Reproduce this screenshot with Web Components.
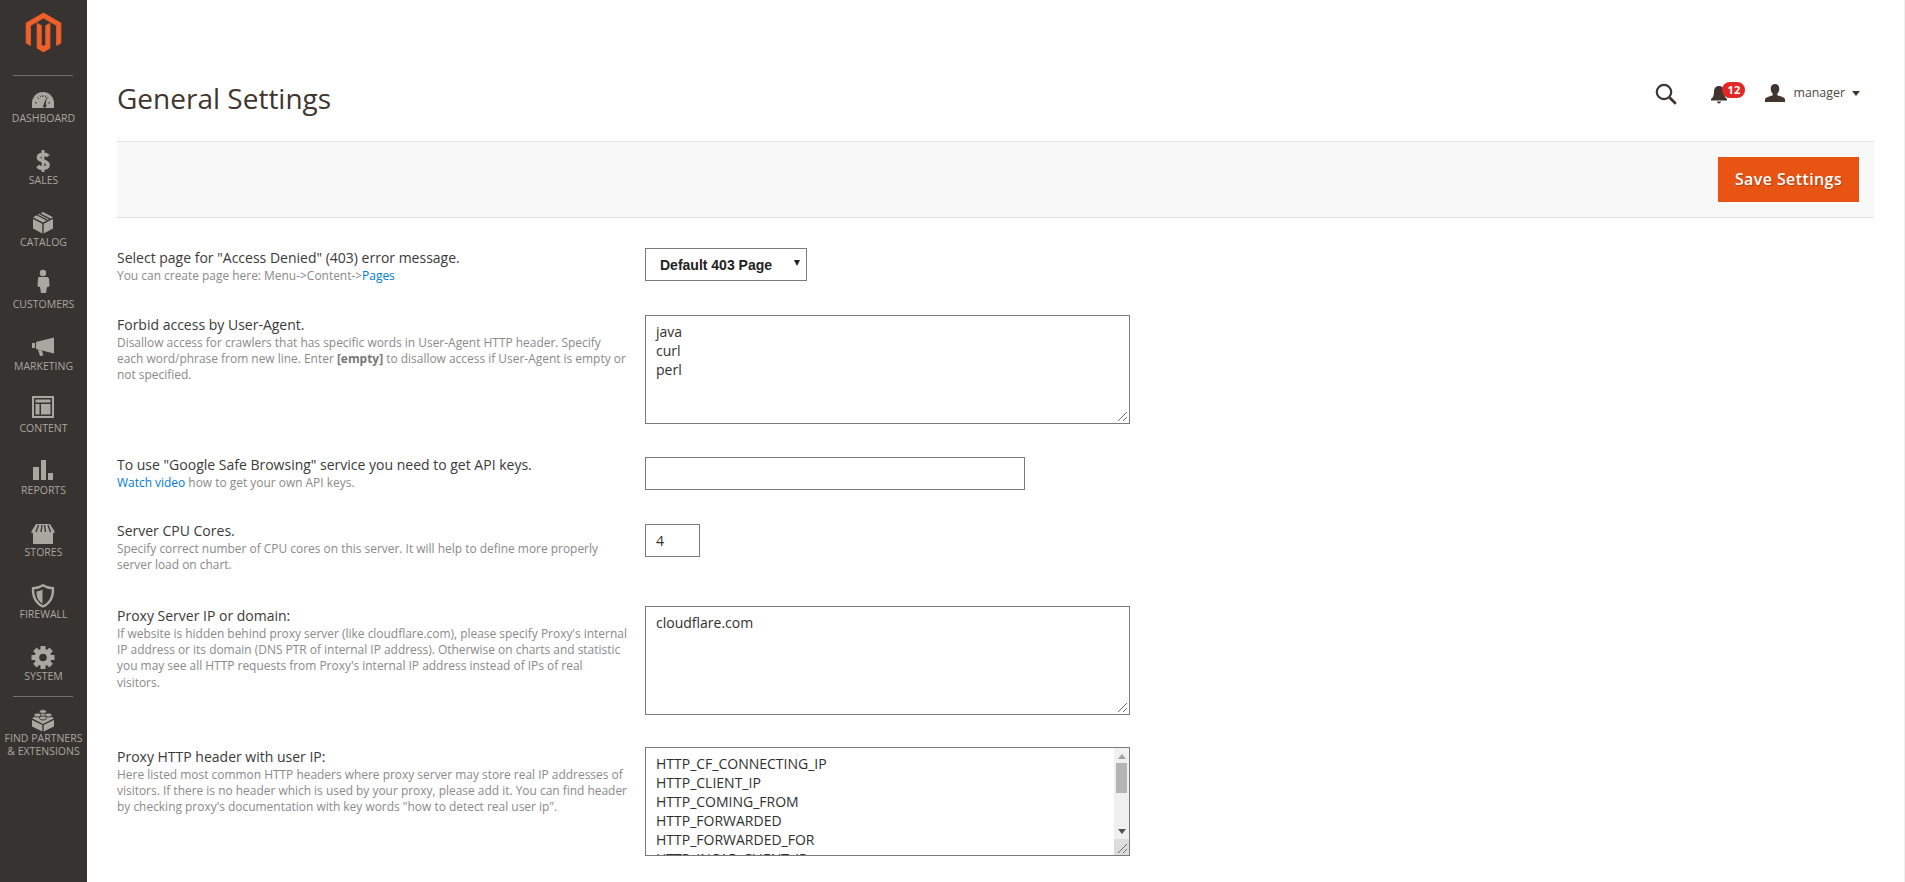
<!DOCTYPE html>
<html lang="en"><head><meta charset="utf-8"><title>General Settings</title>
<style>
html,body{margin:0;padding:0;height:882px;overflow:hidden;background:#fff;font-family:"Open Sans",sans-serif;color:#303030}
admin-shell{height:882px}
nav-item svg{display:block;width:26px;height:24px;overflow:visible}
nav-item svg .f,nav-item svg g.f>*{fill:#aaa6a0}
nav-item svg .d{stroke:#373330;fill:none}
a{color:#007bdb;text-decoration:none}
</style></head>
<body>
<admin-shell>
  <admin-nav slot="nav">
    <nav-item label="Dashboard"><svg viewBox="0 0 26 24"><path class="f" d="M2 21v-5a11 11 0 0 1 22 0v5z"/><path class="d" d="M5 15.5l2 .6M7.5 10.5l1.500 1.300M12.800 8v2M18 10.300l-1.300 1.400M20 15.500l-1.800.6M10 8.600l.6 1.500M15.800 8.600l-.6 1.500" stroke-width="1"/><path d="M13 20l1-3.500 3-7-1.200 7.500a1.600 1.600 0 0 1-2.800 3z" fill="#373330"/></svg></nav-item>
    <nav-item label="Sales"><svg viewBox="0 0 26 24"><path d="M18 7.200C16.500 4.800 8.800 4.500 8.500 8.500 8.200 12.800 18 11 18 15.800c0 4.200-8 4.200-10.300 1.200" fill="none" stroke="#aaa6a0" stroke-width="3.700"/><path d="M13 1v22" stroke="#aaa6a0" stroke-width="2.800"/></svg></nav-item>
    <nav-item label="Catalog"><svg viewBox="0 0 26 24"><path class="f" d="M3 8l9.300 4.800v9.700L3 17.500zM23 8l-9.300 4.800v9.700l9.300-5zM13 1l10 5.200-10 5.300L3 6.200z"/><path class="d" d="M7.200 4l10 5.200M9.800 2.700l10 5.200" stroke-width="1.300"/></svg></nav-item>
    <nav-item label="Customers"><svg viewBox="0 0 26 24"><circle class="f" cx="13" cy="0" r="3.200"/><path class="f" d="M8.500 4h9l1.500 1.500.5 8-2.500.5-1 6h-5l-1-6-2.500-.5.500-8z"/></svg></nav-item>
    <nav-item label="Marketing"><svg viewBox="0 0 26 24"><path class="f" d="M2 8h3v5H2zM6 7l18-4.500v16L6 14zM8 14.800l4 1 1.300 4.700-3.300.5z"/></svg></nav-item>
    <nav-item label="Content"><svg viewBox="0 0 26 24"><path class="f" fill-rule="evenodd" d="M2-1h22v22H2zM4 1v18h18V1z"/><path class="f" d="M5.500 2.500h15v3h-15zM5.500 7h4v10.500h-4zM11 7h9.500v10.500H11z"/></svg></nav-item>
    <nav-item label="Reports"><svg viewBox="0 0 26 24"><path class="f" d="M3 8h6v13H3zM11 1h5v20h-5zM18 14h5v7h-5z"/></svg></nav-item>
    <nav-item label="Stores"><svg viewBox="0 0 26 24"><path class="f" d="M3 12.500h20V23H3zM6 3h14l5 8-2 1.500H3L1 11z"/><path class="d" d="M8.500 4L6 11M12 4l-1 7M14.500 4l1 7M18 4l2.500 7" stroke-width="1.300"/></svg></nav-item>
    <nav-item label="Firewall"><svg viewBox="0 0 26 24"><path d="M13 2.200c3 2 6.500 2.900 10 3 .4 8-2 14.500-10 18.300C5 19.700 2.600 13.200 3 5.200c3.500-.1 7-1 10-3z" fill="none" stroke="#aaa6a0" stroke-width="2.300"/><path class="f" d="M12.500 6.500c-2 1.200-4 1.700-6 1.900-.1 5 1.500 9.500 6 12z"/></svg></nav-item>
    <nav-item label="System"><svg viewBox="0 0 26 24"><g class="f"><rect x="10.500" y="1" width="5" height="23"/><rect x="10.500" y="1" width="5" height="23" transform="rotate(45 13 12.500)"/><rect x="10.500" y="1" width="5" height="23" transform="rotate(90 13 12.500)"/><rect x="10.500" y="1" width="5" height="23" transform="rotate(135 13 12.500)"/><circle cx="13" cy="12.500" r="8.500"/></g><circle cx="13" cy="12.500" r="3.800" fill="#373330"/></svg></nav-item>
    <nav-divider></nav-divider>
    <nav-item wide label="Find Partners &amp; Extensions"><svg viewBox="0 0 26 24"><path class="f" d="M2 13l10.300 5v6.500L2 19.500zM24 13l-10.300 5v6.500L24 19.500zM13 5l11 6.300L13 17 2 11.300z"/><g fill="#aaa6a0" stroke="#373330" stroke-width=".9"><ellipse cx="13" cy="4.500" rx="3.600" ry="2"/><ellipse cx="7.500" cy="8" rx="3.600" ry="2"/><ellipse cx="18.500" cy="8" rx="3.600" ry="2"/><ellipse cx="13" cy="11" rx="3.600" ry="2"/></g></svg></nav-item>
  </admin-nav>
  <page-header title-text="General Settings" user="manager" count="12"></page-header>
  <action-bar label="Save Settings"></action-bar>
  <settings-form>
    <setting-row pitch="67" label='Select page for "Access Denied" (403) error message.'>
      <span slot="help">You can create page here: Menu-&gt;Content-&gt;<a href="#">Pages</a></span>
      <select-box slot="control" value="Default 403 Page"></select-box>
    </setting-row>
    <setting-row pitch="140" label="Forbid access by User-Agent.">
      <span slot="help">Disallow access for crawlers that has specific words in User-Agent HTTP header. Specify<br>each word/phrase from new line. Enter <b style="color:#777">[empty]</b> to disallow access if User-Agent is empty or<br>not specified.</span>
      <text-box slot="control">java
curl
perl</text-box>
    </setting-row>
    <setting-row pitch="66" offset="2" label='To use "Google Safe Browsing" service you need to get API keys.'>
      <span slot="help"><a href="#">Watch video</a> how to get your own API keys.</span>
      <input-box slot="control" width="380"></input-box>
    </setting-row>
    <setting-row pitch="85" offset="3" label="Server CPU Cores.">
      <span slot="help">Specify correct number of CPU cores on this server. It will help to define more properly<br>server load on chart.</span>
      <input-box slot="control" width="55" value="4"></input-box>
    </setting-row>
    <setting-row pitch="141" label="Proxy Server IP or domain:">
      <span slot="help">If website is hidden behind proxy server (like cloudflare.com), please specify Proxy's internal<br>IP address or its domain (DNS PTR of internal IP address). Otherwise on charts and statistic<br>you may see all HTTP requests from Proxy's internal IP address instead of IPs of real<br>visitors.</span>
      <text-box slot="control">cloudflare.com</text-box>
    </setting-row>
    <setting-row pitch="110" label="Proxy HTTP header with user IP:">
      <span slot="help">Here listed most common HTTP headers where proxy server may store real IP addresses of<br>visitors. If there is no header which is used by your proxy, please add it. You can find header<br>by checking proxy's documentation with key words "how to detect real user ip".</span>
      <text-box slot="control" scroll>HTTP_CF_CONNECTING_IP
HTTP_CLIENT_IP
HTTP_COMING_FROM
HTTP_FORWARDED
HTTP_FORWARDED_FOR
HTTP_INCAP_CLIENT_IP</text-box>
    </setting-row>
  </settings-form>
</admin-shell>
<script>
const define=(name,css,html,init)=>{
  customElements.define(name,class extends HTMLElement{
    connectedCallback(){
      if(this.shadowRoot)return;
      const r=this.attachShadow({mode:'open'});
      const a=k=>this.getAttribute(k);
      r.innerHTML='<style>'+css+'</style>'+(typeof html==='function'?html(a,this):html);
      if(init)init(r,a,this);
    }
  });
};
define('admin-shell',
 ':host{display:grid;grid-template-columns:87px 1fr;grid-template-rows:141px 77px 1fr;overflow:hidden;box-shadow:inset -1px 0 #efefef}'+
 '.nav{grid-row:1/4}',
 '<div class="nav"><slot name="nav"></slot></div><slot></slot>');
define('admin-nav',
 ':host{display:flex;flex-direction:column;height:882px;background:#373330;box-sizing:border-box}'+
 '.logo{height:75px;box-sizing:border-box;padding:13px 0 0 26px}.logo svg{display:block;width:35px;height:39px;overflow:visible}'+
 'hr{height:1px;margin:0 14px 11px 13px;border:0;background:#736e69}',
 '<div class="logo"><svg viewBox="0 0 41 46"><path fill="#f1602a" stroke="#f1602a" stroke-width=".9" d="M20.500 0L41 11.800v23.700l-5.100 2.900V14.800L20.500 6 5.100 14.800l.1 23.600L0 35.500V11.800zm2.600 37.600V14.900l5-2.900v29.500l-7.600 4.400-7.500-4.400-.1-29.500 5 2.900v22.700l2.600 1.500z"/></svg></div><hr><slot></slot>');
define('nav-divider',
 ':host{display:block;height:1px;background:#736e69;margin:-11px 14px 10px 13px}','');
define('nav-item',
 ':host{display:block;height:62px;text-align:center;color:#aaa6a0}:host([wide]){height:auto}'+
 '.i{display:block;margin:0 auto 0 30px;width:26px;height:24px}'+
 '.l{font:10.500px/13px "Open Sans",sans-serif;text-transform:uppercase;padding-top:1px}',
 a=>'<div class="i"><slot></slot></div><div class="l">'+a('label')+'</div>');
define('page-header',
 ':host{display:flex;grid-column:2;justify-content:space-between;align-items:flex-start;padding:0 45px 0 30px}'+
 'h1{margin:78px 0 0;font:400 28px/40px "Open Sans",sans-serif;color:#41362f}'+
 '.a{display:flex;align-items:center;margin-top:82px;height:22px;color:#514943}'+
 '.s{width:22px;height:22px;margin:2px 34px 0 0;display:block}'+
 '.b{position:relative;width:34px;height:22px;margin-right:20px}.b svg{position:absolute;left:0;top:4px;width:16px;height:18px}'+
 '.n{position:absolute;left:11px;top:0;width:23px;height:16px;border-radius:8px;background:#e22626;color:#fff;font:700 11px/16px "Open Sans",sans-serif;text-align:center}'+
 '.u{width:20px;height:18px;margin-right:8px;display:block}.m{font-size:12.400px;line-height:20px;margin-right:7px}'+
 '.c{width:0;height:0;border:4px solid transparent;border-top:5px solid #41362f;border-bottom:0}',
 a=>`<h1>${a('title-text')}</h1><div class="a">
 <svg class="s" viewBox="0 0 22 22"><circle cx="9" cy="9" r="7.200" fill="none" stroke="#41362f" stroke-width="2.200"/><path d="M14.500 14.500l6.300 6.300" stroke="#41362f" stroke-width="2.800"/></svg>
 <div class="b"><svg viewBox="0 0 16 18"><path fill="#41362f" d="M8 0c3.500 0 5 2.500 5 5.500 0 4 1 6 3 7.500v1.500H0V13c2-1.500 3-3.500 3-7.500C3 2.500 4.500 0 8 0zM6 15.500h4a2 2 0 0 1-4 0z"/></svg><span class="n">${a('count')}</span></div>
 <svg class="u" viewBox="0 0 20 18"><path fill="#41362f" d="M10 0c2.700 0 4.300 2 4.300 4.800 0 2-.9 3.800-2 5v1.500c2.500 1 7.700 2 7.700 4.200V18H0v-2.500c0-2.200 5.200-3.200 7.700-4.200V9.800c-1.100-1.200-2-3-2-5C5.700 2 7.300 0 10 0z"/></svg>
 <span class="m">${a('user')}</span><span class="c"></span></div>`);
define('action-bar',
 ':host{display:flex;grid-column:2;justify-content:flex-end;align-items:center;margin:0 31px 0 30px;padding-right:15px;background:#f8f8f8;border-top:1px solid #e3e3e3;border-bottom:1px solid #e3e3e3;box-sizing:border-box}'+
 'button{width:141px;height:45px;padding:0 0 2px;border:0;background:#e85414;color:#fff;font:600 16px "Open Sans",sans-serif;text-shadow:1px 1px 1px rgba(0,0,0,.25);letter-spacing:.4px}',
 a=>`<button>${a('label')}</button>`);
define('settings-form',
 ':host{display:block;grid-column:2;padding:30px 0 0 30px}','<slot></slot>');
define('setting-row',
 ':host{display:grid;grid-template-columns:528px 1fr;align-items:start}'+
 '.l{font-size:14px;line-height:20px;color:#3a3a3a;white-space:nowrap}'+
 '.h{font-size:11.950px;line-height:16.400px;color:#8a8a8a;margin-top:-.4px}',
 a=>`<div class="l">${a('label')}<div class="h"><slot name="help"></slot></div></div><div class="c" style="padding-top:${a('offset')||0}px"><slot name="control"></slot></div>`,
 (r,a,h)=>{h.style.minHeight=a('pitch')+'px';});
define('select-box',
 ':host{display:flex;box-sizing:border-box;width:162px;height:33px;border:1px solid #7a7a7a;align-items:center;padding-left:14px;font:700 14px "Liberation Sans",sans-serif;color:#222;background:#fff}'+
 'i{margin-left:22px;margin-top:-3px;width:0;height:0;border:3px solid transparent;border-top:6px solid #222;border-bottom:0}',
 a=>`<span>${a('value')}</span><i></i>`);
define('input-box',
 ':host{display:block;box-sizing:border-box;height:33px;border:1px solid #7a7a7a;padding-left:10px;font-size:14px;line-height:31px;color:#303030;background:#fff}',
 (a,h)=>{h.style.width=a('width')+'px';return a('value')||'';});
define('text-box',
 ':host{display:block;position:relative;box-sizing:border-box;width:485px;height:109px;border:1px solid #7a7a7a;overflow:hidden;background:#fff;color:#303030}'+
 '.t{padding:6px 10px;font-size:14px;line-height:19.100px;white-space:pre}'+
 '.sb{position:absolute;right:0;top:0;bottom:0;width:15px;background:#f0f0f0}'+
 '.th{position:absolute;left:2px;right:2px;top:15px;height:30px;background:#b5b5b5}'+
 '.up,.dn{position:absolute;left:3.500px;width:0;height:0;border:4px solid transparent}'+
 '.up{top:6px;border-bottom:5px solid #a3a3a3;border-top:0}.dn{bottom:21px;border-top:5px solid #505050;border-bottom:0}'+
 '.cr{position:absolute;right:0;bottom:0;width:15px;height:16px;background:#dcdcdc}'+
 '.g{position:absolute;right:1px;bottom:1px;width:12px;height:12px;display:block}',
 (a,h)=>`<div class="t"><slot></slot></div>`+(h.hasAttribute('scroll')?'<div class="sb"><div class="up"></div><div class="th"></div><div class="dn"></div></div><div class="cr"></div>':'')+
 '<svg class="g" viewBox="0 0 12 12"><path d="M2 11L11 2M7 11l4-4" stroke="#6a6a6a" stroke-width="1" fill="none"/></svg>');
</script>
</body></html>
